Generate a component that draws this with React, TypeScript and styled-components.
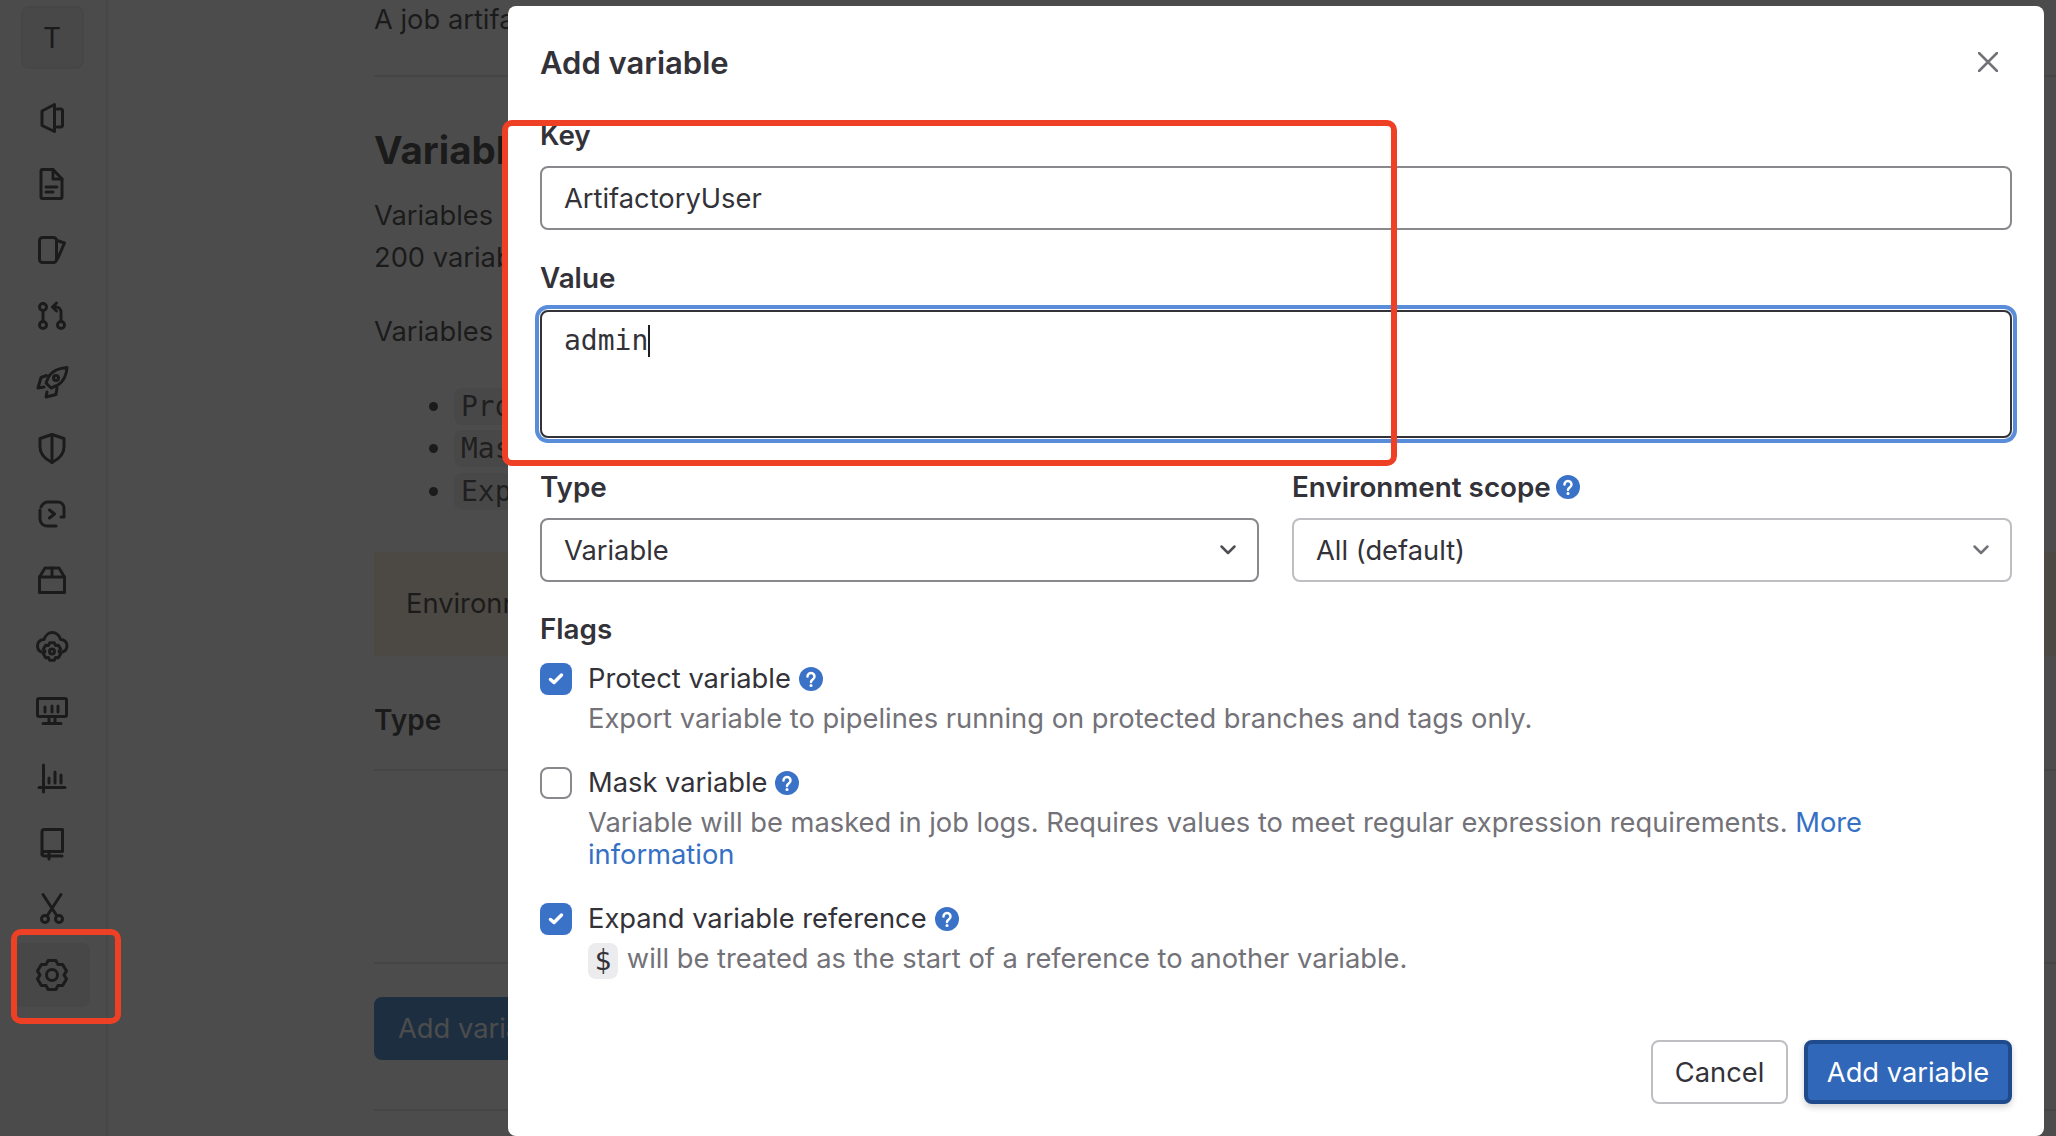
import React from 'react';
import styled, { createGlobalStyle } from 'styled-components';

const Global = createGlobalStyle`
  html, body { margin: 0; padding: 0; background: #fff; }
  body { font-family: Inter, "Noto Sans", "Liberation Sans", sans-serif; color: #333238; }
  * { box-sizing: border-box; }
`;

const Screen = styled.div`
  position: relative;
  width: 2056px;
  height: 1136px;
  overflow: hidden;
  display: flex;
`;

const Sidebar = styled.nav`
  width: 108px;
  flex: none;
  border-right: 2px solid #e6e6e6;
  background: #fbfafd;
  display: flex;
  flex-direction: column;
  align-items: center;
  padding-top: 6px;
`;

const Avatar = styled.div`
  width: 63px;
  height: 63px;
  margin-left: -2px;
  margin-bottom: 17px;
  border-radius: 8px;
  border: 2px solid #dedde3;
  background: #ecebf0;
  display: flex;
  align-items: center;
  justify-content: center;
  font-size: 28px;
  color: #0a0a0c;
`;

const NavItem = styled.div<{ $active?: boolean }>`
  width: 76px;
  height: 64px;
  margin-left: -2px;
  margin-bottom: 1.95px;
  flex: none;
  display: flex;
  align-items: center;
  justify-content: center;
  border-radius: 8px;
  background: ${p => (p.$active ? '#e3e3e6' : 'transparent')};
  color: #0a0a0c;
  svg { display: block; }
`;

const Main = styled.main`
  flex: 1;
  padding-left: 266px;
  color: #0a0a0c;
  font-size: 27.3px;
  line-height: 42px;
`;

const TopPara = styled.p`
  margin: -1px 0 0;
  white-space: nowrap;
`;

const Rule = styled.div<{ $gap: number }>`
  height: 2px;
  background: #dcdcde;
  margin-top: ${p => p.$gap}px;
`;

const Heading = styled.h2`
  margin: 48px 0 0;
  font-size: 38.5px;
  line-height: 50px;
  font-weight: 700;
`;

const Para = styled.p<{ $gap: number }>`
  margin: ${p => p.$gap}px 0 0;
  white-space: nowrap;
`;

const BulletList = styled.ul`
  margin: 32px 0 0;
  padding: 0 0 0 80px;
  li { height: 42.4px; white-space: nowrap; }
  li::marker { font-size: 28px; }
`;

const Code = styled.code`
  display: inline-block;
  font-family: "DejaVu Sans Mono", "Liberation Mono", monospace;
  font-size: 28px;
  line-height: 37px;
  padding: 0 7px;
  border-radius: 8px;
  background: #ececef;
  color: #1f1e24;
`;

const Alert = styled.div`
  margin-top: 40px;
  height: 104px;
  padding: 0 32px;
  display: flex;
  align-items: center;
  background: #ffebd0;
  white-space: nowrap;
`;

const TableHead = styled.div`
  margin-top: 48px;
  line-height: 32px;
  font-weight: 600;
  font-size: 28px;
`;

const PageButton = styled.div`
  margin-top: 33px;
  width: 208px;
  height: 63px;
  padding-left: 24px;
  display: flex;
  align-items: center;
  border-radius: 8px;
  background: #1068bf;
  color: #fff;
`;

const Overlay = styled.div`
  position: absolute;
  inset: 0;
  background: rgba(31, 31, 31, 0.8);
`;

const Modal = styled.section`
  position: absolute;
  left: 508px;
  top: 6px;
  width: 1536px;
  height: 1130px;
  padding: 0 32px 32px 32px;
  background: #fff;
  border-radius: 8px;
  display: flex;
  flex-direction: column;
  color: #333238;
  font-size: 27.3px;
`;

const ModalHeader = styled.header`
  height: 113px;
  flex: none;
  display: flex;
  align-items: center;
  justify-content: space-between;
`;

const ModalTitle = styled.h1`
  margin: 0;
  font-size: 31px;
  font-weight: 600;
  color: #333238;
`;

const FieldLabel = styled.div<{ $gap?: number; $tail?: number }>`
  margin-top: ${p => p.$gap ?? 0}px;
  margin-bottom: ${p => p.$tail ?? 15}px;
  height: 32px;
  line-height: 32px;
  font-size: 27.8px;
  font-weight: 600;
  display: flex;
  align-items: center;
  gap: 5px;
  white-space: nowrap;
`;

const TextField = styled.div`
  height: 64px;
  padding: 0 22px;
  display: flex;
  align-items: center;
  border: 2px solid #89888d;
  border-radius: 8px;
`;

const TextArea = styled.div`
  height: 128px;
  padding: 11px 22px;
  border: 2px solid #333238;
  border-radius: 8px;
  box-shadow: 0 0 0 1px #fff, 0 0 0 5px #5a8dd9;
  font-family: "DejaVu Sans Mono", "Liberation Mono", monospace;
  font-size: 28px;
  line-height: 36px;
  display: flex;
  align-items: flex-start;
`;

const Caret = styled.span`
  display: inline-block;
  width: 2px;
  height: 32px;
  margin-top: 2px;
  background: #1f1e24;
`;

const TwoCols = styled.div`
  margin-top: 33px;
  display: grid;
  grid-template-columns: 719px 720px;
  gap: 33px;
`;

const SelectBox = styled.div<{ $strong?: boolean }>`
  height: 64px;
  padding: 0 19px 0 22px;
  display: flex;
  align-items: center;
  justify-content: space-between;
  border: 2px solid ${p => (p.$strong ? '#89888d' : '#bfbfc3')};
  border-radius: 8px;
  color: #333238;
`;

const FlagRow = styled.div<{ $gap: number }>`
  margin-top: ${p => p.$gap}px;
  display: grid;
  grid-template-columns: 32px 1fr;
  column-gap: 16px;
`;

const CheckBox = styled.div<{ $on?: boolean }>`
  width: 32px;
  height: 32px;
  border-radius: 8px;
  display: flex;
  align-items: center;
  justify-content: center;
  background: ${p => (p.$on ? '#3a72c8' : '#fff')};
  border: ${p => (p.$on ? 'none' : '2px solid #89888d')};
`;

const FlagLabel = styled.div`
  height: 32px;
  line-height: 32px;
  display: flex;
  align-items: center;
  gap: 8px;
  white-space: nowrap;
`;

const FlagHelp = styled.div`
  grid-column: 2;
  margin-top: 8px;
  line-height: 32px;
  color: #737278;
  width: 1330px;
`;

const InlineCode = styled.code`
  display: inline-block;
  height: 36px;
  margin-right: 9px;
  padding: 0 6.5px;
  font-family: "DejaVu Sans Mono", "Liberation Mono", monospace;
  font-size: 28px;
  line-height: 36px;
  border-radius: 8px;
  background: #ececef;
  color: #333238;
  vertical-align: middle;
`;

const HelpLink = styled.a`
  color: #3570c4;
  text-decoration: none;
`;

const Footer = styled.footer`
  margin-top: auto;
  display: flex;
  justify-content: flex-end;
  gap: 16px;
`;

const CancelButton = styled.div`
  width: 137px;
  height: 64px;
  display: flex;
  align-items: center;
  justify-content: center;
  border: 2px solid #bfbfc3;
  border-radius: 8px;
`;

const PrimaryButton = styled.div`
  width: 208px;
  height: 64px;
  display: flex;
  align-items: center;
  justify-content: center;
  background: #3067b9;
  border: 4px solid #1f4a8c;
  border-radius: 8px;
  color: #fff;
  box-shadow: 0 3px 6px rgba(31, 30, 36, 0.2);
`;

const CloseButton = styled.div`
  margin: -1px 14px 0 0;
  display: flex;
`;

const Callout = styled.div<{ $x: number; $y: number; $w: number; $h: number }>`
  position: absolute;
  left: ${p => p.$x}px;
  top: ${p => p.$y}px;
  width: ${p => p.$w}px;
  height: ${p => p.$h}px;
  border: 6px solid #ee4025;
  border-radius: 10px;
  pointer-events: none;
`;

function gearPath(cx: number, cy: number, R: number, r: number): string {
  const pts: string[] = [];
  for (let i = 0; i < 6; i++) {
    const base = (i * Math.PI) / 3 - Math.PI / 2;
    const spots: Array<[number, number]> = [
      [base - 0.26, R],
      [base + 0.26, R],
      [base + Math.PI / 6, r],
    ];
    spots.forEach(([a, d]) => {
      pts.push(`${(cx + d * Math.cos(a)).toFixed(2)} ${(cy + d * Math.sin(a)).toFixed(2)}`);
    });
  }
  return `M${pts.join('L')}Z`;
}

const NavIcon: React.FC<{ children: React.ReactNode }> = ({ children }) => (
  <svg width="32" height="32" viewBox="0 0 32 32" fill="none" stroke="currentColor" strokeWidth="3" strokeLinecap="round" strokeLinejoin="round" overflow="visible">
    {children}
  </svg>
);

const navIcons: React.ReactNode[] = [
  <><path d="M6 9 18.5 2.5v27L6 23.5Z" /><path d="M21 7h4a1.5 1.5 0 0 1 1.5 1.5v15a1.5 1.5 0 0 1-1.5 1.5h-4" /></>,
  <><path d="M6.5 1.5H17l9 9.5v18a1.5 1.5 0 0 1-1.500 1.500h-18A1.500 1.500 0 0 1 5 29V3a1.500 1.500 0 0 1 1.500-1.500Z" /><path d="M17 1.500V11h9" /><path d="M10 19h11M10 24h7" /></>,
  <><rect x="3.500" y="3.500" width="17" height="25" rx="3" /><path d="M21 6.500l7.500 2.500-7 16" /></>,
  <><circle cx="7" cy="7" r="3.500" /><circle cx="7" cy="25" r="3.500" /><circle cx="25" cy="25" r="3.500" /><path d="M7 10.500v11" /><path d="M25 21.500V12a5 5 0 0 0-5-5h-3" /><path d="M20.500 3 16.500 7l4 4" /></>,
  <><path d="M31 1.500c-8 .5-14 3-18 8.500l-3 7 5 5 7-3c6-4 8.500-10 9-17.500Z" /><circle cx="20" cy="12" r="2.500" /><path d="M10.500 9.500 5 11.500 2 22l6-1" /><path d="M21 22l-1 6.500-10 2.500 1-5" /></>,
  <><path d="M16 2.500 28 6.500V15c0 7-5 12-12 15.500C9 27 4 22 4 15V6.500Z" /><path d="M16 2.500v28" /></>,
  <><path d="M5 9C6.500 6 9 4 12 4h10a6 6 0 0 1 6 6v9h-3" /><path d="M4 12v9a7 7 0 0 0 7 7h9" /><path d="M13.500 12l5 4-5 4" /></>,
  <><path d="M3.500 13 9 4h14l5.500 9v15.500H3.500Z" /><path d="M3.500 13h25M16 4v9" /></>,
  <><path d="M5.500 22C2.500 21 1.500 18 1.500 15.500 1.500 12 4.500 9.500 8 9.500 9.500 5 13 2.500 16 2.500c4 0 7.500 3 8.500 7 3.500 0 6.500 2.500 6.500 6 0 2.500-1.500 5.500-4.500 6.500" /><path d={gearPath(16, 21.500, 9, 7)} /><circle cx="16" cy="21.500" r="2.500" /></>,
  <><rect x="1.500" y="3.500" width="29" height="18" rx="1.500" /><path d="M9 12v5M16 11v6M22 11v6" /><path d="M13 22v5M19 22v5M7 28.500h18" /></>,
  <><path d="M7.500 4v27M3 26.500h26" /><path d="M13 17v5M19 11v11M25 14v8" /></>,
  <><path d="M8.500 2.500H26.500v22H9a3 3 0 0 0-3 3V5a2.500 2.500 0 0 1 2.500-2.500Z" /><path d="M6 27.500a2 2 0 0 0 2 1.500h18M13 25v7" /></>,
  <><circle cx="9" cy="26" r="3.500" /><circle cx="23" cy="26" r="3.500" /><path d="M7 1.500 20 21.500M25 1.500 12 21.500" /></>,
  <><path d={gearPath(16, 16, 15, 12)} /><circle cx="16" cy="16" r="5.500" /></>,
];

const HelpIcon: React.FC = () => (
  <svg width="24" height="24" viewBox="0 0 24 24">
    <circle cx="12" cy="12" r="12" fill="#3a72c8" />
    <path d="M8.500 9.500a3.500 3.500 0 1 1 5.500 2.800c-1.300.9-2 1.400-2 2.700" fill="none" stroke="#fff" strokeWidth="2.500" strokeLinecap="round" />
    <circle cx="12" cy="18.500" r="1.500" fill="#fff" />
  </svg>
);

const CheckMark: React.FC = () => (
  <svg width="18" height="16" viewBox="0 0 18 16" fill="none">
    <path d="M3.500 8.500 7 11.500l7.500-7.500" stroke="#fff" strokeWidth="3.500" strokeLinecap="round" strokeLinejoin="round" />
  </svg>
);

const Chevron: React.FC<{ color: string }> = ({ color }) => (
  <svg width="20" height="20" viewBox="0 0 20 20" fill="none">
    <path d="M3.500 6.500 10 13l6.500-6.500" stroke={color} strokeWidth="2.500" strokeLinecap="round" strokeLinejoin="round" />
  </svg>
);

const CloseIcon: React.FC = () => (
  <svg width="20" height="20" viewBox="0 0 20 20" fill="none">
    <path d="M1 1l18 18M19 1 1 19" stroke="#737278" strokeWidth="2.500" strokeLinecap="round" />
  </svg>
);

export default function App() {
  return (
    <>
      <Global />
      <Screen>
        <Sidebar>
          <Avatar>T</Avatar>
          {navIcons.map((icon, i) => (
            <NavItem key={i} $active={i === navIcons.length - 1}>
              <NavIcon>{icon}</NavIcon>
            </NavItem>
          ))}
        </Sidebar>
        <Main>
          <TopPara>A job artifact</TopPara>
          <Rule $gap={34} />
          <Heading>Variables</Heading>
          <Para $gap={20}>
            Variables store
            <br />
            200 variables
          </Para>
          <Para $gap={32}>Variables can</Para>
          <BulletList>
            <li><Code>Protected</Code></li>
            <li><Code>Masked</Code></li>
            <li><Code>Expanded</Code></li>
          </BulletList>
          <Alert>Environment</Alert>
          <TableHead>Type</TableHead>
          <Rule $gap={33} />
          <Rule $gap={191} />
          <PageButton>Add variable</PageButton>
          <Rule $gap={49} />
        </Main>
        <Overlay />
        <Modal>
          <ModalHeader>
            <ModalTitle>Add variable</ModalTitle>
            <CloseButton><CloseIcon /></CloseButton>
          </ModalHeader>
          <FieldLabel>Key</FieldLabel>
          <TextField>ArtifactoryUser</TextField>
          <FieldLabel $gap={32} $tail={16}>Value</FieldLabel>
          <TextArea>admin<Caret /></TextArea>
          <TwoCols>
            <div>
              <FieldLabel>Type</FieldLabel>
              <SelectBox $strong>Variable<Chevron color="#4f4e54" /></SelectBox>
            </div>
            <div>
              <FieldLabel>Environment scope <HelpIcon /></FieldLabel>
              <SelectBox>All (default)<Chevron color="#737278" /></SelectBox>
            </div>
          </TwoCols>
          <FieldLabel $gap={31} $tail={18}>Flags</FieldLabel>
          <FlagRow $gap={0}>
            <CheckBox $on><CheckMark /></CheckBox>
            <FlagLabel>Protect variable <HelpIcon /></FlagLabel>
            <FlagHelp>Export variable to pipelines running on protected branches and tags only.</FlagHelp>
          </FlagRow>
          <FlagRow $gap={32}>
            <CheckBox />
            <FlagLabel>Mask variable <HelpIcon /></FlagLabel>
            <FlagHelp>
              Variable will be masked in job logs. Requires values to meet regular expression requirements.{' '}
              <HelpLink>More information</HelpLink>
            </FlagHelp>
          </FlagRow>
          <FlagRow $gap={32}>
            <CheckBox $on><CheckMark /></CheckBox>
            <FlagLabel>Expand variable reference <HelpIcon /></FlagLabel>
            <FlagHelp><InlineCode>$</InlineCode>will be treated as the start of a reference to another variable.</FlagHelp>
          </FlagRow>
          <Footer>
            <CancelButton>Cancel</CancelButton>
            <PrimaryButton>Add variable</PrimaryButton>
          </Footer>
        </Modal>
        <Callout $x={502} $y={120} $w={895} $h={346} />
        <Callout $x={11} $y={929} $w={110} $h={95} />
      </Screen>
    </>
  );
}
